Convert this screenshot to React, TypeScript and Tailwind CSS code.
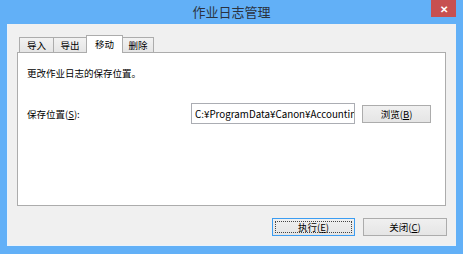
import React from "react";

const font = { fontFamily: '"Noto Sans CJK SC", "Noto Sans", sans-serif' };

function Tab({ label, w, active }: { label: string; w: string; active?: boolean }) {
  if (active) {
    return (
      <div
        className={`${w} h-[18px] -mb-px -ml-px relative z-10 bg-white border border-b-0 border-[#acacac] flex items-start justify-center pt-[2px] text-[9.5px] leading-[12px] text-black`}
      >
        {label}
      </div>
    );
  }
  return (
    <div
      className={`${w} h-[15px] -ml-px bg-gradient-to-b from-[#f2f2f2] to-[#e5e5e5] border border-b-0 border-[#acacac] flex items-center justify-center text-[9.5px] leading-[12px] text-black`}
    >
      {label}
    </div>
  );
}

function Button({
  children,
  w,
  primary,
}: {
  children: React.ReactNode;
  w: string;
  primary?: boolean;
}) {
  return (
    <div
      className={`${w} h-[18px] relative border ${
        primary ? "border-[#3c9df2]" : "border-[#acacac]"
      } bg-gradient-to-b from-[#f0f0f0] to-[#e5e5e5] flex items-center justify-center text-[9.5px] leading-[12px] text-black`}
    >
      {primary && <div className="absolute inset-[2px] border border-dotted border-[#444]" />}
      <span>{children}</span>
    </div>
  );
}

export default function App() {
  return (
    <div
      className="w-[463px] h-[254px] bg-[#62b0f7] flex flex-col relative overflow-hidden"
      style={font}
    >
      {/* title bar */}
      <div className="h-[24px] flex items-center justify-center text-[13px] text-[#2b3340] leading-none pb-[2px]">
        作业日志管理
      </div>
      <div className="absolute top-0 right-[7px] w-[25px] h-[17px] bg-[#c75050] flex items-center justify-center text-white text-[10px] font-bold leading-none">
        ✕
      </div>

      {/* client area */}
      <div className="mx-[7px] h-[222px] bg-[#f0f0f0] border-l border-b border-[#e9f3fc] flex flex-col">
        <div className="mt-[11px] ml-[9px] mr-[10px] flex flex-col">
          {/* tabs */}
          <div className="flex items-end h-[17px] pl-[3px]">
            <Tab label="导入" w="w-[35px]" />
            <Tab label="导出" w="w-[34px]" />
            <Tab label="移动" w="w-[37px]" active />
            <Tab label="删除" w="w-[32px]" />
          </div>
          {/* panel */}
          <div className="w-[429px] h-[154px] bg-white border border-[#acacac] px-[9px] pt-[14px] text-[9.5px] leading-[12px] text-black">
            <div>更改作业日志的保存位置。</div>
            <div className="mt-[24px] flex items-center h-[21px]">
              <div className="w-[164px]">
                保存位置(<span className="underline">S</span>):
              </div>
              <div className="w-[164px] h-[21px] border border-[#abadb3] bg-white flex items-center pl-[3px] overflow-hidden whitespace-nowrap text-[9.8px]">
                C:¥ProgramData¥Canon¥Accounting
              </div>
              <div className="ml-[7px]">
                <Button w="w-[69px]">
                  浏览(<span className="underline">B</span>)
                </Button>
              </div>
            </div>
          </div>
        </div>
        {/* buttons */}
        <div className="mt-[12px] flex justify-end gap-[8px] pr-[9px]">
          <Button w="w-[83px]" primary>
            执行(<span className="underline">E</span>)
          </Button>
          <Button w="w-[84px]">
            关闭(<span className="underline">C</span>)
          </Button>
        </div>
      </div>
    </div>
  );
}
